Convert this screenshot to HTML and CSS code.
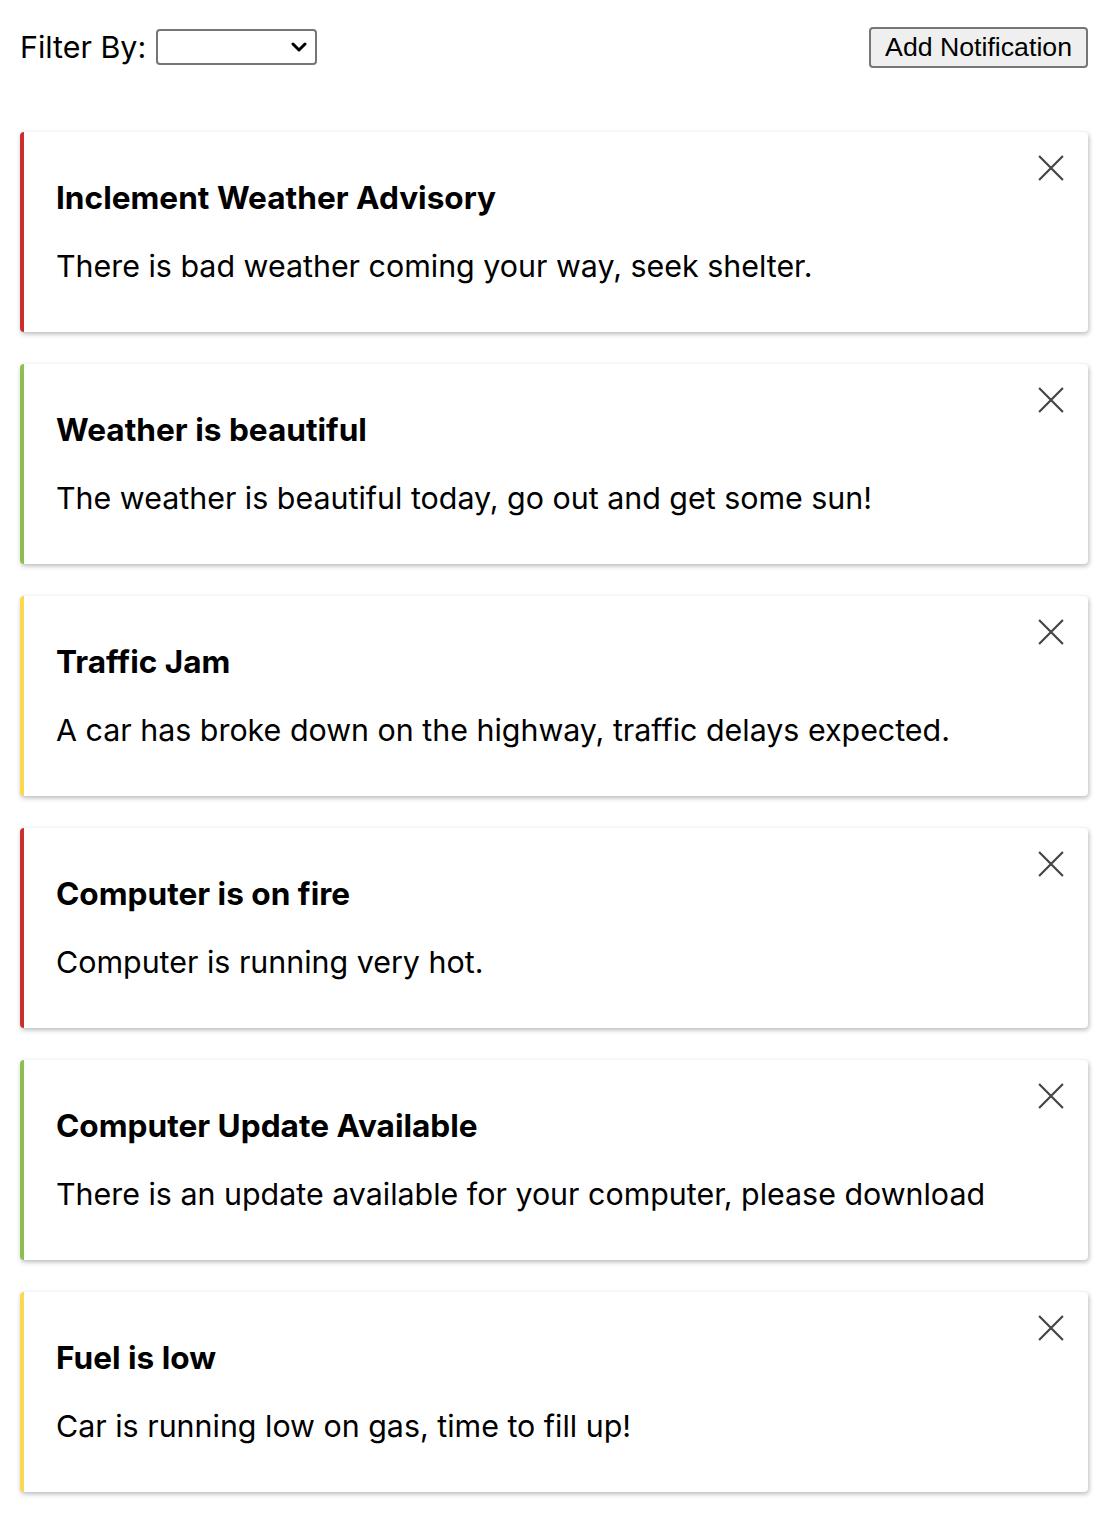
FILE: index.html
```html
<!DOCTYPE html>
<html>
<head>
<meta charset="utf-8">
<link rel="stylesheet" href="styles.css">
</head>
<body>
<div class="toolbar">
  <label class="filter">Filter By:
    <span class="select-wrap">
      <select class="select"><option></option></select>
      <svg class="chev" viewBox="0 0 16 10" width="16" height="10"><path d="M2 2L8 8L14 2" stroke="#000" stroke-width="3" fill="none" stroke-linecap="round" stroke-linejoin="round"/></svg>
    </span>
  </label>
  <button class="add">Add Notification</button>
</div>
<div class="list">
  <div class="card red">
    <button class="close" aria-label="close"><svg viewBox="0 0 24 24" width="26" height="26"><path d="M1 1L23 23M23 1L1 23" stroke="#444" stroke-width="2" fill="none"/></svg></button>
    <h3 class="title">Inclement Weather Advisory</h3>
    <p class="body">There is bad weather coming your way, seek shelter.</p>
  </div>
  <div class="card green">
    <button class="close" aria-label="close"><svg viewBox="0 0 24 24" width="26" height="26"><path d="M1 1L23 23M23 1L1 23" stroke="#444" stroke-width="2" fill="none"/></svg></button>
    <h3 class="title">Weather is beautiful</h3>
    <p class="body">The weather is beautiful today, go out and get some sun!</p>
  </div>
  <div class="card yellow">
    <button class="close" aria-label="close"><svg viewBox="0 0 24 24" width="26" height="26"><path d="M1 1L23 23M23 1L1 23" stroke="#444" stroke-width="2" fill="none"/></svg></button>
    <h3 class="title">Traffic Jam</h3>
    <p class="body">A car has broke down on the highway, traffic delays expected.</p>
  </div>
  <div class="card red">
    <button class="close" aria-label="close"><svg viewBox="0 0 24 24" width="26" height="26"><path d="M1 1L23 23M23 1L1 23" stroke="#444" stroke-width="2" fill="none"/></svg></button>
    <h3 class="title">Computer is on fire</h3>
    <p class="body">Computer is running very hot.</p>
  </div>
  <div class="card green">
    <button class="close" aria-label="close"><svg viewBox="0 0 24 24" width="26" height="26"><path d="M1 1L23 23M23 1L1 23" stroke="#444" stroke-width="2" fill="none"/></svg></button>
    <h3 class="title">Computer Update Available</h3>
    <p class="body">There is an update available for your computer, please download</p>
  </div>
  <div class="card yellow">
    <button class="close" aria-label="close"><svg viewBox="0 0 24 24" width="26" height="26"><path d="M1 1L23 23M23 1L1 23" stroke="#444" stroke-width="2" fill="none"/></svg></button>
    <h3 class="title">Fuel is low</h3>
    <p class="body">Car is running low on gas, time to fill up!</p>
  </div>
</div>
</body>
</html>
```
FILE: styles.css
```css
html, body {
  margin: 0;
  padding: 0;
  background: #fff;
}
body {
  font-family: Inter, "Noto Sans", sans-serif;
  color: #000;
  padding: 26px 26px 38px 20px;
}
.toolbar {
  display: flex;
  justify-content: space-between;
  align-items: center;
  height: 42px;
}
.filter {
  font-size: 30.4px;
  display: flex;
  align-items: center;
  gap: 10px;
}
.select-wrap {
  position: relative;
  display: block;
  height: 36px;
}
.select {
  display: block;
  width: 161px;
  height: 36px;
  border: 2px solid #767676;
  border-radius: 4px;
  background: #fff;
  appearance: none;
  -webkit-appearance: none;
}
.chev {
  position: absolute;
  right: 10px;
  top: 13px;
  pointer-events: none;
}
.add {
  font-family: "Liberation Sans", Arial, sans-serif;
  font-size: 26.7px;
  height: 41px;
  padding: 0 14px;
  background: #efefef;
  border: 2px solid #767676;
  border-radius: 4px;
  color: #000;
}
.list {
  margin-top: 64px;
  display: flex;
  flex-direction: column;
  gap: 32px;
}
.card {
  position: relative;
  height: 200px;
  box-sizing: border-box;
  background: #fff;
  border-left: 4px solid #c62828;
  border-radius: 4px;
  box-shadow: 1px 2px 5px rgba(0,0,0,0.28);
  padding: 0 32px;
}
.card.red { border-left-color: #c9302c; }
.card.green { border-left-color: #8dbf50; }
.card.yellow { border-left-color: #fbd84f; }
.close {
  position: absolute;
  top: 23px;
  right: 24px;
  background: none;
  border: 0;
  padding: 0;
  display: block;
}
.title {
  margin: 0;
  padding-top: 46px;
  font-size: 31.6px;
  font-weight: 700;
  line-height: 40px;
}
.body {
  margin: 28px 0 0;
  font-size: 30.4px;
  line-height: 40px;
}
```
